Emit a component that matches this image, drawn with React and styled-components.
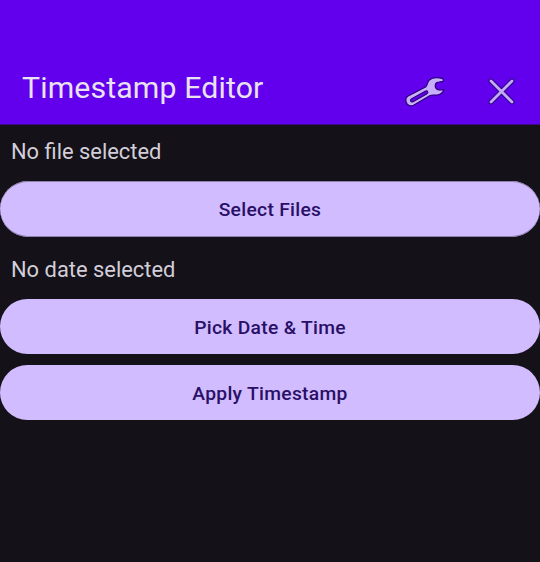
import React from 'react';
import styled, { createGlobalStyle } from 'styled-components';

const GlobalStyle = createGlobalStyle`
  * { box-sizing: border-box; }
  body { margin: 0; background: #141118; font-family: Roboto, sans-serif; }
`;

const Screen = styled.main`
  min-height: 562px;
  overflow: hidden;
  background: #141118;
`;

const AppBar = styled.header`
  display: flex;
  align-items: flex-end;
  height: 125px;
  padding-left: 22px;
  background: #6200ee;
  border-bottom: 1px solid #3f0b8c;
`;

const Title = styled.h1`
  flex: 1;
  margin: 0 0 17px;
  font-size: 30.25px;
  line-height: 38px;
  letter-spacing: 0.13px;
  font-weight: 400;
  color: #e9e2f0;
`;

const IconRow = styled.div`
  display: flex;
  gap: 25px;
`;

const IconButton = styled.button`
  display: flex;
  margin: 0 0 9px;
  padding: 0;
  border: 0;
  background: none;
`;

const Status = styled.p`
  margin: 0;
  padding: ${({ $top }) => $top} 11px 0;
  height: ${({ $height }) => $height};
  font-size: 21.9px;
  line-height: 26px;
  color: #d3ced9;
`;

const Actions = styled.div`
  display: flex;
  flex-direction: column;
  gap: 11px;
`;

const PillButton = styled.button`
  display: block;
  width: 100%;
  height: ${({ $height }) => $height || '55px'};
  padding: 2px 0 0;
  border: 0;
  border-radius: 28px;
  background: #d1bcff;
  box-shadow: ${({ $softEdge }) => ($softEdge ? 'inset 0 1px #8f80ae, inset 0 -1px #8f80ae' : 'none')};
  color: #290f66;
  font: 500 19.25px/24px Roboto, sans-serif;
  letter-spacing: 0.3px;
`;

const WrenchIcon = () => (
  <svg width="60" height="50" viewBox="0 0 180 150" fill="#c9aefb" stroke="#2b0078" strokeWidth="3.5" strokeLinejoin="round">
    <path d="M144 41 C130 37 112 37 103 45 C96 52 98 60 93 65 L38 94 C28 101 32 118 44 122 C48 124 53 122 57 120 L104 92 C111 88 118 91 127 90 C137 88 145 82 146 74 L131 75 C123 73 119 66 121 59 C122 54 127 51 132 51 L145 49 Z" />
    <path d="M49 102 L92 78 C97 75 101 83 96 86 L54 110 C47 113 44 105 49 102 Z" fill="#6200ee" />
  </svg>
);

const CloseIcon = () => (
  <svg width="60" height="50" viewBox="0 0 60 50" fill="none" strokeLinecap="round">
    <path d="M11 16 L32 37 M32 16 L11 37" stroke="#2f0785" strokeWidth="5" />
    <path d="M11 16 L32 37 M32 16 L11 37" stroke="#c4a9fb" strokeWidth="2.8" />
  </svg>
);

export default function App() {
  return (
    <>
      <GlobalStyle />
      <Screen>
        <AppBar>
          <Title>Timestamp Editor</Title>
          <IconRow>
            <IconButton aria-label="Settings"><WrenchIcon /></IconButton>
            <IconButton aria-label="Close"><CloseIcon /></IconButton>
          </IconRow>
        </AppBar>
        <Status $top="14px" $height="56px">No file selected</Status>
        <PillButton $height="56px" $softEdge>Select Files</PillButton>
        <Status $top="20px" $height="62px">No date selected</Status>
        <Actions>
          <PillButton>Pick Date &amp; Time</PillButton>
          <PillButton>Apply Timestamp</PillButton>
        </Actions>
      </Screen>
    </>
  );
}
